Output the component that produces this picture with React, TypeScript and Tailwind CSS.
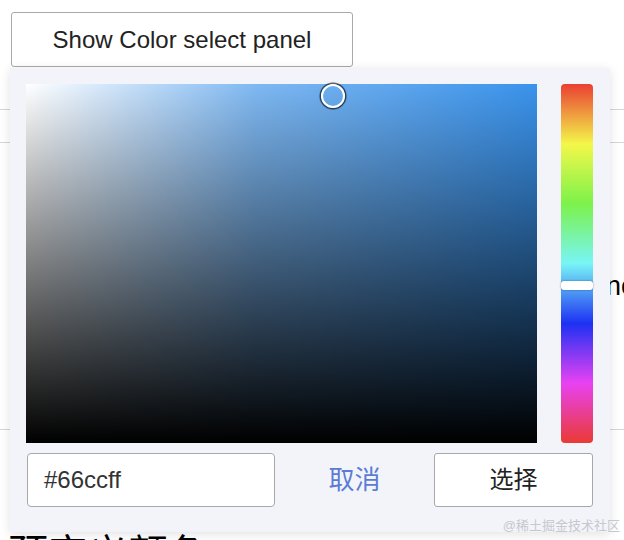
import React from 'react';

const FONT = "font-['Liberation_Sans','Noto_Sans_CJK_SC',sans-serif]";

function SaturationArea() {
  return (
    <div className="relative w-[511px] h-[359px] bg-[#3a93ec] bg-[linear-gradient(to_top,#000,transparent),linear-gradient(to_right,#fff,rgba(255,255,255,0.35)_45%,transparent)]">
      {/* 取色圆点 */}
      <div className="absolute left-[307px] top-[12px] -translate-x-1/2 -translate-y-1/2 w-[24px] h-[24px] rounded-full border-2 border-white shadow-[0_0_0_1.5px_rgba(0,0,0,0.55),0_0_3px_rgba(0,0,0,0.4)]" />
    </div>
  );
}

function HueBar() {
  return (
    <div className="relative w-[32px] h-[359px] rounded-[4px] bg-[linear-gradient(to_bottom,#ea3f33_0%,#f4f74a_16.7%,#7cf24a_33.3%,#78f5f6_50%,#1d31f3_66.7%,#e842f2_83.3%,#ea3a34_100%)]">
      <div className="absolute left-0 right-0 top-[197px] h-[9px] rounded-[3px] bg-white shadow-[0_0_2px_rgba(0,0,0,0.45)]" />
    </div>
  );
}

export default function App() {
  return (
    <div className={`relative h-[540px] overflow-hidden bg-white text-[#222] ${FONT}`}>
      <div className="pl-[11px] pt-3">
        <button className="h-[55px] w-[342px] border border-[#a9a9a9] rounded-[3px] bg-white text-[24px] text-[#222]">
          Show Color select panel
        </button>
      </div>

      {/* 背后的页面内容 */}
      <div className="mt-[42px] border-t border-[#d6d6d6]" />
      <div className="h-[33px] border-b border-[#d6d6d6]" />
      <div className="h-[287px] border-b border-[#d6d6d6] flex items-center pl-[606px] whitespace-nowrap text-[27px] text-black">
        none
      </div>
      <div className="pt-[104px] pl-[8px] text-[40px] leading-none text-black whitespace-nowrap">预定义颜色</div>

      {/* 颜色选择面板 */}
      <div className="absolute left-[10px] top-[68px] w-[600px] h-[464px] bg-[#f3f4fa] shadow-[0_2px_10px_rgba(0,0,0,0.12)] pt-4 pl-4 pr-[17px] flex flex-col">
        <div className="flex gap-6">
          <SaturationArea />
          <HueBar />
        </div>
        <div className="mt-[10px] flex items-center">
          <div className="ml-px w-[248px] h-[54px] border border-[#a8a8a8] rounded-[4px] bg-white flex items-center pl-4 text-[24px] text-[#333]">
            #66ccff
          </div>
          <div className="flex-1 text-center text-[26px] text-[#5b7cd5]">取消</div>
          <button className="w-[159px] h-[54px] border border-[#a8a8a8] rounded-[3px] bg-white text-[24px] text-[#222]">
            选择
          </button>
        </div>
      </div>

      <div className="absolute right-[4px] bottom-[5px] text-[13px] text-[#c6c8ce] whitespace-nowrap">@稀土掘金技术社区</div>
    </div>
  );
}
